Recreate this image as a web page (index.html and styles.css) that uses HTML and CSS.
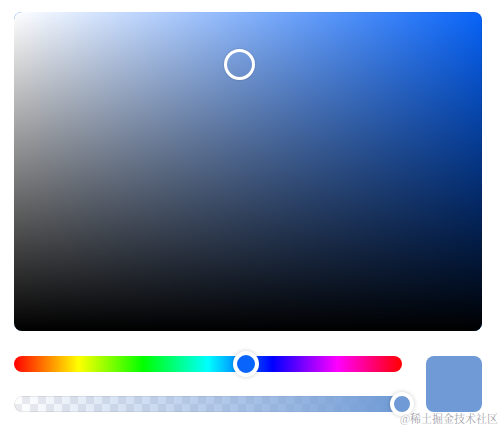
FILE: index.html
```html
<!DOCTYPE html>
<html>
<head>
<meta charset="utf-8">
<link rel="stylesheet" href="styles.css">
</head>
<body>
<div class="picker">
  <div class="panel">
    <div class="panel-white"></div>
    <div class="panel-black"></div>
    <div class="sv-thumb"></div>
  </div>
  <div class="controls">
    <div class="sliders">
      <div class="hue">
        <div class="hue-thumb"></div>
      </div>
      <div class="alpha">
        <div class="alpha-fill"></div>
        <div class="alpha-thumb"></div>
      </div>
    </div>
    <div class="swatch"></div>
  </div>
  <div class="watermark">@稀土掘金技术社区</div>
</div>
</body>
</html>
```
FILE: styles.css
```css
html, body {
  margin: 0;
  padding: 0;
  background: #ffffff;
}
.picker {
  position: relative;
  width: 502px;
  height: 428px;
  box-sizing: border-box;
  padding: 12px 20px 0 14px;
  display: flex;
  flex-direction: column;
  gap: 25px;
  font-family: "Noto Sans CJK SC", sans-serif;
}
.panel {
  position: relative;
  width: 468px;
  height: 319px;
  border-radius: 8px;
  overflow: hidden;
  background: rgb(8, 100, 250);
  box-shadow: inset 0 0 0 1px rgba(0,0,0,0.08);
}
.panel-white {
  position: absolute;
  inset: 0;
  background: linear-gradient(to right, #ffffff, rgba(255,255,255,0));
}
.panel-black {
  position: absolute;
  inset: 0;
  background: linear-gradient(to top, #000000, rgba(0,0,0,0));
}
.sv-thumb {
  position: absolute;
  left: 210px;
  top: 37px;
  width: 31px;
  height: 31px;
  box-sizing: border-box;
  border: 3px solid #ffffff;
  border-radius: 50%;
  box-shadow: 0 0 2px rgba(0,0,0,0.25);
}
.controls {
  display: flex;
  gap: 24px;
  height: 56px;
}
.sliders {
  width: 388px;
  display: flex;
  flex-direction: column;
  justify-content: space-between;
}
.hue, .alpha {
  position: relative;
  height: 16px;
  border-radius: 8px;
}
.hue {
  background: linear-gradient(to right, #ff0000 0%, #ffff00 16.66%, #00ff00 33.33%, #00ffff 50%, #0000ff 66.66%, #ff00ff 83.33%, #ff0000 100%);
}
.hue-thumb {
  position: absolute;
  left: 219px;
  top: -5px;
  width: 26px;
  height: 26px;
  box-sizing: border-box;
  border-radius: 50%;
  border: 4px solid #ffffff;
  background: rgb(8, 100, 250);
  box-shadow: 0 0 4px rgba(0,0,0,0.2);
}
.alpha {
  background-color: #ffffff;
  background-image:
    linear-gradient(45deg, #ebebef 25%, transparent 25%, transparent 75%, #ebebef 75%),
    linear-gradient(45deg, #ebebef 25%, transparent 25%, transparent 75%, #ebebef 75%);
  background-size: 16px 16px;
  background-position: 0 0, 8px 8px;
  box-shadow: inset 0 0 0 1px rgba(0,0,0,0.08);
}
.alpha-fill {
  position: absolute;
  inset: 0;
  border-radius: 8px;
  background: linear-gradient(to right, rgba(111,154,213,0), rgb(111,154,213));
}
.alpha-thumb {
  position: absolute;
  left: 376px;
  top: -4px;
  width: 24px;
  height: 24px;
  box-sizing: border-box;
  border-radius: 50%;
  border: 4px solid #ffffff;
  background: rgb(111,154,213);
  box-shadow: 0 0 4px rgba(0,0,0,0.2);
}
.swatch {
  width: 56px;
  height: 56px;
  border-radius: 8px;
  background: rgb(111,154,213);
}
.watermark {
  position: absolute;
  right: 4px;
  top: 411px;
  font-family: "Noto Serif CJK SC", "Noto Sans CJK SC", serif;
  font-size: 11px;
  line-height: 15px;
  color: rgba(150,150,158,0.9);
  text-shadow: 0 0 2px #ffffff;
}
```
